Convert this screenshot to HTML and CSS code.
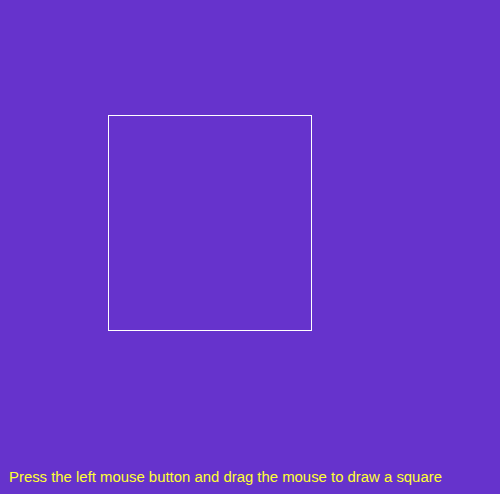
FILE: index.html
```html
<!DOCTYPE html>
<html>
<head>
<meta charset="utf-8">
<link rel="stylesheet" href="styles.css">
</head>
<body>
<div class="canvas">
  <div class="square"></div>
  <p class="hint">Press the left mouse button and drag the mouse to draw a square</p>
</div>
</body>
</html>
```
FILE: styles.css
```css
html, body {
  margin: 0;
  padding: 0;
  width: 500px;
  height: 494px;
  overflow: hidden;
  background: #6633cc;
}
.canvas {
  position: relative;
  width: 500px;
  height: 494px;
  display: flex;
  flex-direction: column;
  justify-content: flex-end;
}
.square {
  position: absolute;
  left: 108px;
  top: 115px;
  width: 202px;
  height: 214px;
  border: 1px solid #ffffff;
}
.hint {
  margin: 0 0 8px 9px;
  font-family: "Liberation Sans", Arial, sans-serif;
  font-size: 14.9px;
  line-height: 18px;
  color: #ffff33;
}
```
